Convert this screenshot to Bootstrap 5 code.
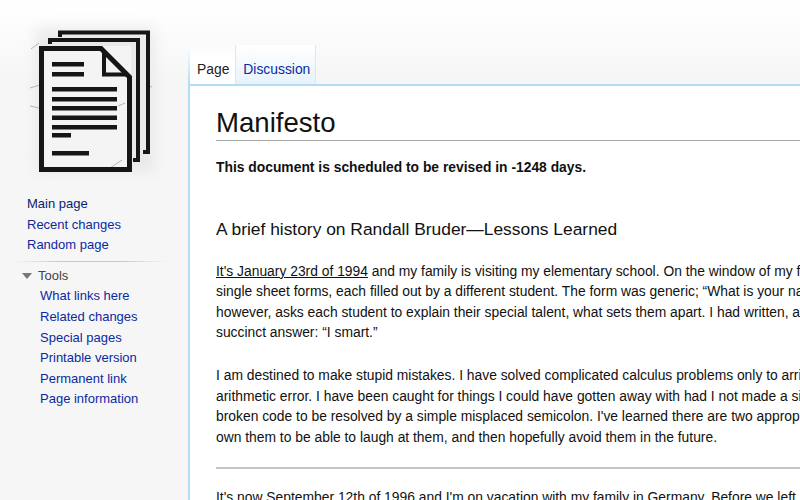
<!DOCTYPE html>
<html lang="en">
<head>
<meta charset="utf-8">
<title>Manifesto</title>
<link href="https://cdn.jsdelivr.net/npm/bootstrap@5.3.0/dist/css/bootstrap.min.css" rel="stylesheet">
<style>
html,body{height:500px;overflow:hidden}
body{background:linear-gradient(#fff 0,#f6f6f6 80px);font-family:"Liberation Sans",Arial,sans-serif;font-size:13.85px;color:#111;line-height:20.6px}
.wiki-shell{height:500px}
.wiki-side{width:188px;flex:none;font-size:13px}
.wiki-logo{display:block;margin-bottom:14px}
.wiki-links{margin:0 0 0 27px;padding:0;list-style:none}
.wiki-links a,.wiki-tab a{color:#0b2aa0;text-decoration:none}
.wiki-links a.seen{color:#0a1c6e}
.wiki-sep{height:1px;margin:5px 20px 4px 14px;background:linear-gradient(90deg,#f6f6f6,#c8c8c8 30%,#c8c8c8 70%,#f6f6f6)}
.wiki-head{margin-left:22px;color:#444;gap:6px}
.wiki-tri{width:0;height:0;border:5px solid transparent;border-top:6px solid #777;border-bottom:0}
.wiki-sub{margin-left:40px}
.wiki-main{flex:1;min-width:0;padding-top:45px}
.wiki-tabs{height:41px;border-bottom:2px solid #b3dcf8}
.wiki-tab{height:39px;padding:14px 5px 0 7px;border-right:1px solid #d5e9f7;background:linear-gradient(#fff,#e6f2fb)}
.wiki-tab.on{color:#222;border-left:2px solid;border-image:linear-gradient(#fff,#b3dcf8) 1;border-right:0;padding-left:7px;padding-right:6px;background:linear-gradient(#fbfbfb,#fff 40%)}
.wiki-tab.on+.wiki-tab{border-left:1px solid #d5e9f7}
.wiki-body{height:414px;background:#fff;border-left:2px solid #b3dcf8;padding:19px 0 0 26px;overflow:hidden}
.wiki-title{font-family:inherit;font-size:27.6px;font-weight:400;line-height:35px;margin:0;border-bottom:1px solid #aaa;color:#111}
.wiki-note{font-weight:700;margin:16px 0 0}
.wiki-sub-title{font-family:inherit;font-size:17.4px;font-weight:400;line-height:24px;margin:39px 0 0}
.wiki-lines{margin:20px 0 0;white-space:nowrap}
.wiki-lines u{text-underline-offset:1px}
.wiki-para{margin:22px 0 0;white-space:nowrap}
.wiki-rule{height:2px;background:#c4c4c4;margin:20px 0 18px}
</style>
</head>
<body>
<div class="d-flex wiki-shell">
  <aside class="wiki-side">
    <svg class="wiki-logo" width="188" height="180" viewBox="0 0 188 180" aria-label="Logo">
      <defs><filter id="soft" x="-20%" y="-20%" width="140%" height="140%"><feGaussianBlur stdDeviation="7"/></filter><filter id="ink"><feGaussianBlur stdDeviation=".35"/></filter></defs>
      <rect x="36" y="28" width="118" height="144" fill="#e4e4e4" opacity=".75" filter="url(#soft)"/>
      <path d="M39 46h92v126H39z" fill="#f4f4f4"/>
      <g fill="none" stroke="#b5b5b5" stroke-width="1">
        <path d="M31 49L39 43"/><path d="M30 88L40 85"/><path d="M30 106L39 108"/><path d="M110 168L122 160"/><path d="M118 106L125 103"/><path d="M147 86L152 87"/>
      </g>
      <g filter="url(#ink)">
      <g fill="none" stroke="#161616">
        <path d="M60 37V32.500H148V152H143" stroke-width="4"/>
        <path d="M50 44V40H138V160H133" stroke-width="4"/>
        <path d="M41.500 48.500H101L129.500 77V169.500H41.500Z" stroke-width="5"/>
        <path d="M104 51V74.500H127" stroke-width="4"/>
        <path d="M104 51L127 74.500" stroke-width="3"/>
      </g>
      <g fill="#161616">
        <rect x="52" y="62" width="32" height="4.500"/>
        <rect x="52" y="72" width="32" height="4.500"/>
        <rect x="52" y="87" width="65" height="4.500"/>
        <rect x="52" y="97" width="65" height="4.500"/>
        <rect x="52" y="106" width="65" height="4.500"/>
        <rect x="52" y="115.500" width="65" height="4.500"/>
        <rect x="52" y="125" width="65" height="4.500"/>
        <rect x="52" y="133" width="19" height="4.500"/>
        <rect x="52" y="151" width="37" height="4.500"/>
      </g>
      </g>
    </svg>
    <ul class="wiki-links">
      <li><a class="seen" href="#">Main page</a></li>
      <li><a href="#">Recent changes</a></li>
      <li><a href="#">Random page</a></li>
    </ul>
    <div class="wiki-sep"></div>
    <div class="d-flex align-items-center wiki-head"><span class="wiki-tri"></span><span>Tools</span></div>
    <ul class="wiki-links wiki-sub">
      <li><a href="#">What links here</a></li>
      <li><a href="#">Related changes</a></li>
      <li><a href="#">Special pages</a></li>
      <li><a href="#">Printable version</a></li>
      <li><a href="#">Permanent link</a></li>
      <li><a href="#">Page information</a></li>
    </ul>
  </aside>
  <main class="wiki-main">
    <div class="d-flex wiki-tabs">
      <div class="wiki-tab on">Page</div>
      <div class="wiki-tab"><a href="#">Discussion</a></div>
    </div>
    <div class="wiki-body">
      <h1 class="wiki-title">Manifesto</h1>
      <p class="wiki-note">This document is scheduled to be revised in -1248 days.</p>
      <h2 class="wiki-sub-title">A brief history on Randall Bruder—Lessons Learned</h2>
      <p class="wiki-lines"><u>It's January 23rd of 1994</u> and my family is visiting my elementary school. On the window of my first<br>
      single sheet forms, each filled out by a different student. The form was generic; “What is your name<br>
      however, asks each student to explain their special talent, what sets them apart. I had written, a<br>
      succinct answer: “I smart.”</p>
      <p class="wiki-para">I am destined to make stupid mistakes. I have solved complicated calculus problems only to arrive<br>
      arithmetic error. I have been caught for things I could have gotten away with had I not made a simple<br>
      broken code to be resolved by a simple misplaced semicolon. I've learned there are two appropriate<br>
      own them to be able to laugh at them, and then hopefully avoid them in the future.</p>
      <div class="wiki-rule"></div>
      <p class="wiki-para m-0">It's now September 12th of 1996 and I'm on vacation with my family in Germany. Before we left</p>
    </div>
  </main>
</div>
<script src="https://cdn.jsdelivr.net/npm/bootstrap@5.3.0/dist/js/bootstrap.bundle.min.js"></script>
</body>
</html>
